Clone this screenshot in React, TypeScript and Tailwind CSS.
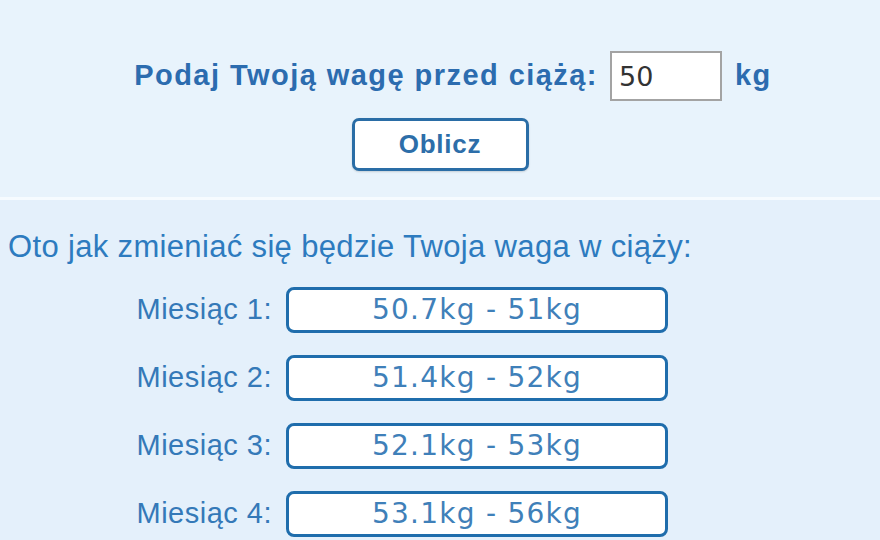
import { useState } from "react";

const months = [
  { n: 1, range: "50.7kg - 51kg" },
  { n: 2, range: "51.4kg - 52kg" },
  { n: 3, range: "52.1kg - 53kg" },
  { n: 4, range: "53.1kg - 56kg" },
];

export default function App() {
  const [weight, setWeight] = useState("50");

  return (
    <div className="w-[880px] h-[540px] overflow-hidden bg-[#e4f0fb] font-['Liberation_Sans',Arial,sans-serif]">
      {/* form */}
      <div className="h-[197px] bg-[#e8f3fc] flex flex-col items-center pt-[51px]">
        <div className="flex items-center ml-[26px]">
          <span className="text-[29px] font-bold text-[#2c6caf] tracking-[0.05em]">Podaj Twoją wagę przed ciążą:</span>
          <input
            value={weight}
            onChange={(e) => setWeight(e.target.value)}
            className="ml-[12px] w-[112px] h-[50px] border-2 border-[#a3a3a3] bg-white px-[7px] text-[27px] text-[#333] font-['DejaVu_Sans',sans-serif] outline-none"
          />
          <span className="ml-[13px] text-[29px] font-bold text-[#2c6caf] tracking-[0.05em]">kg</span>
        </div>
        <button className="mt-[17px] w-[177px] h-[53px] rounded-[7px] border-[3px] border-[#2a6da6] bg-white text-[26px] font-bold text-[#2d6ea9] tracking-[0.03em] shadow-[0_1px_2px_rgba(0,0,0,0.15)]">
          Oblicz
        </button>
      </div>

      <div className="h-[3px] bg-[#f6fbff]" />

      {/* results */}
      <div className="pt-[29px] pl-[8px] text-[31px] leading-[36px] text-[#2d7bbf] tracking-[0.011em]">
        Oto jak zmieniać się będzie Twoja waga w ciąży:
      </div>

      <div className="mt-[22px] flex flex-col gap-[22px]">
        {months.map((m) => (
          <div key={m.n} className="flex items-center">
            <span className="w-[272px] text-right text-[29px] text-[#3479b8] tracking-[0.017em]">Miesiąc {m.n}:</span>
            <div className="ml-[14px] w-[382px] h-[46px] rounded-[8px] border-[3px] border-[#1f6dac] bg-white flex items-center justify-center font-['DejaVu_Sans',sans-serif] text-[28px] text-[#3f80b9] tracking-[0.045em]">
              {m.range}
            </div>
          </div>
        ))}
      </div>
    </div>
  );
}
